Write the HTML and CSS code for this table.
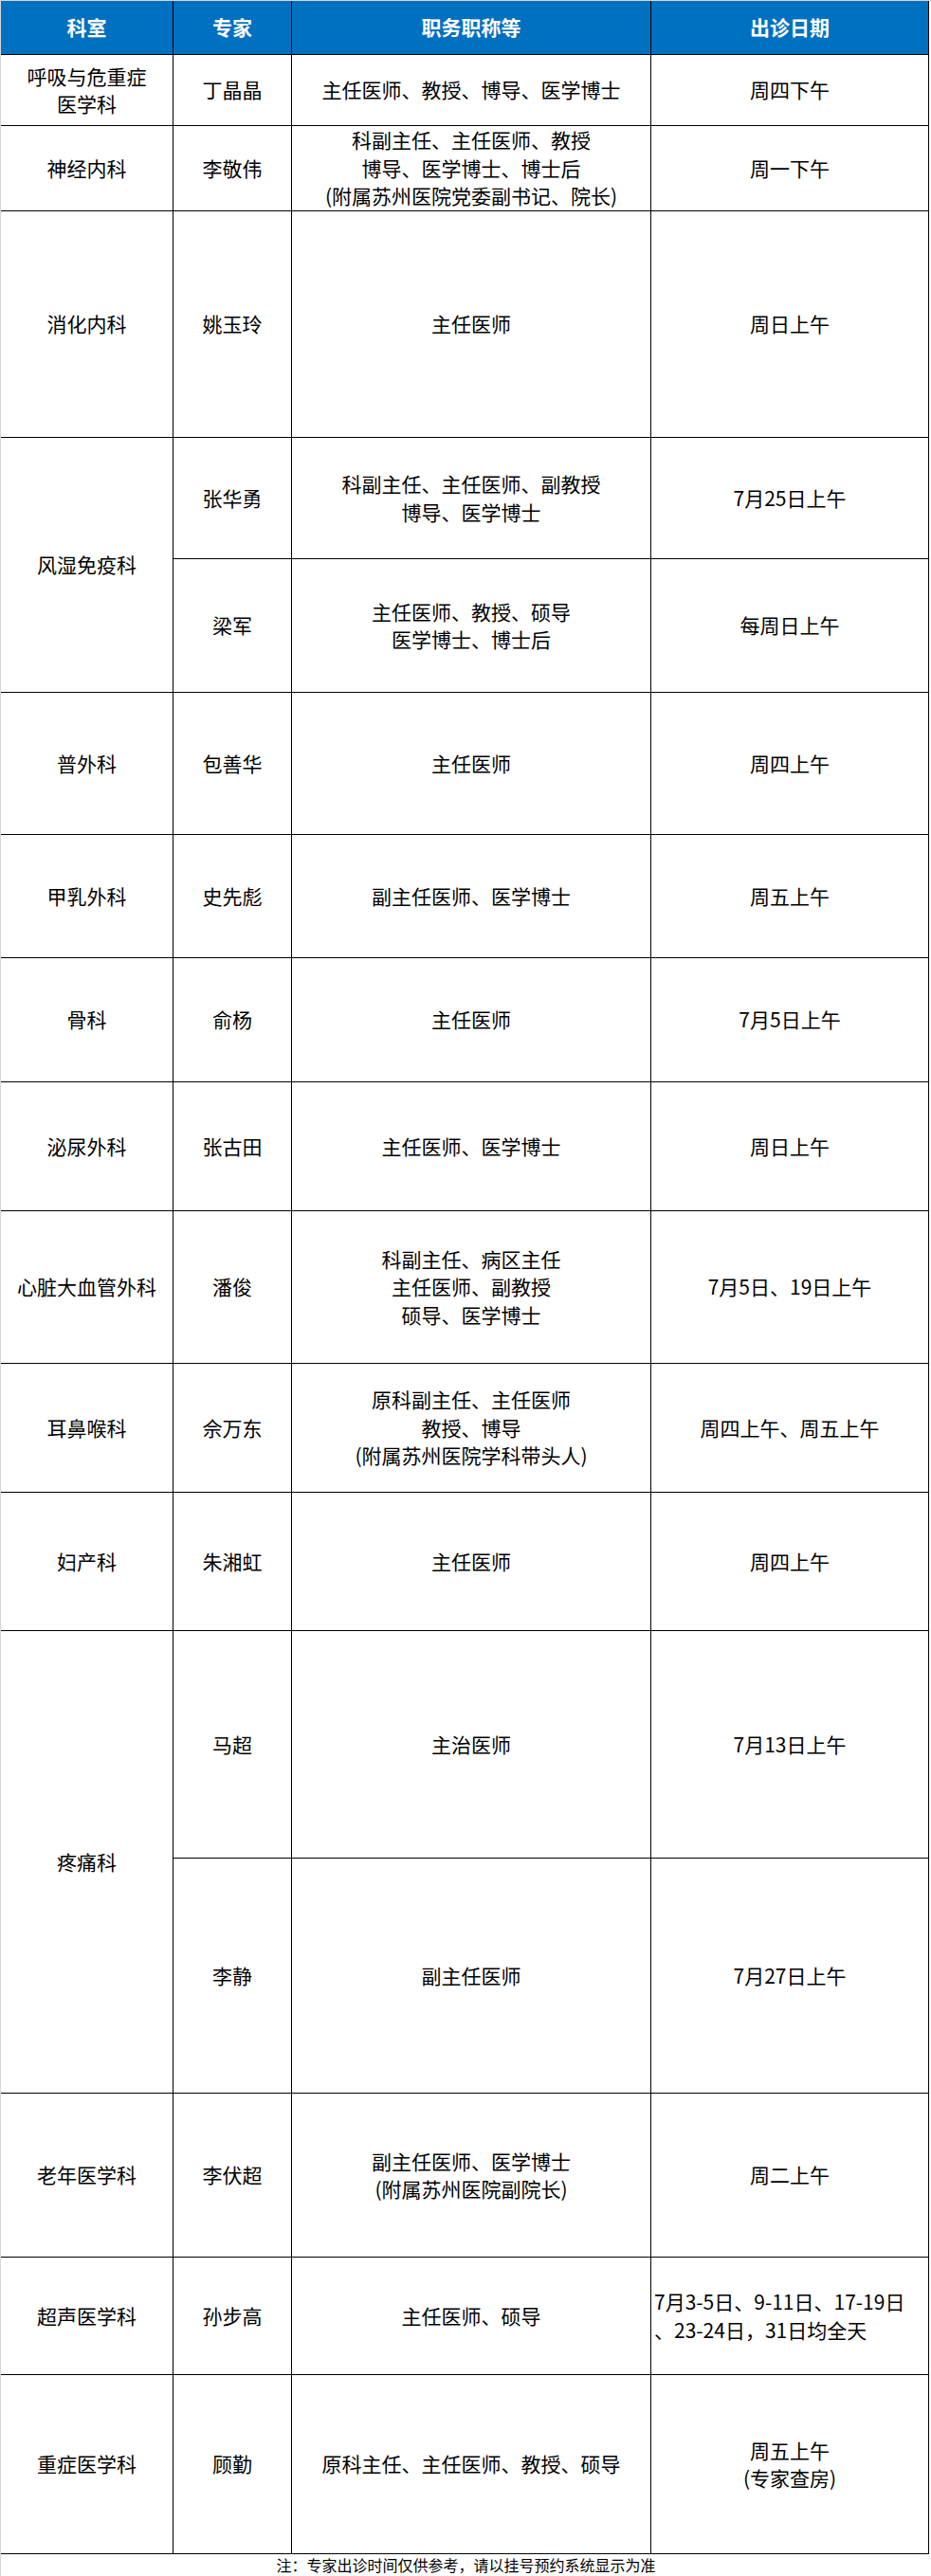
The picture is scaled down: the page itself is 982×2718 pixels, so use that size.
FILE: index.html
```html
<!DOCTYPE html>
<html lang="zh-CN">
<head>
<meta charset="utf-8">
<title>专家出诊表</title>
<link rel="stylesheet" href="styles.css">
</head>
<body>
<div class="sheet">
  <div class="grid">
    <div class="cell head">科室</div>
    <div class="cell head">专家</div>
    <div class="cell head">职务职称等</div>
    <div class="cell head">出诊日期</div>

    <div class="cell"><p>呼吸与危重症<br>医学科</p></div>
    <div class="cell">丁晶晶</div>
    <div class="cell">主任医师、教授、博导、医学博士</div>
    <div class="cell">周四下午</div>

    <div class="cell">神经内科</div>
    <div class="cell">李敬伟</div>
    <div class="cell"><p>科副主任、主任医师、教授<br>博导、医学博士、博士后<br>(附属苏州医院党委副书记、院长)</p></div>
    <div class="cell">周一下午</div>

    <div class="cell">消化内科</div>
    <div class="cell">姚玉玲</div>
    <div class="cell">主任医师</div>
    <div class="cell">周日上午</div>

    <div class="cell span2">风湿免疫科</div>
    <div class="cell">张华勇</div>
    <div class="cell"><p>科副主任、主任医师、副教授<br>博导、医学博士</p></div>
    <div class="cell">7月25日上午</div>
    <div class="cell">梁军</div>
    <div class="cell"><p>主任医师、教授、硕导<br>医学博士、博士后</p></div>
    <div class="cell">每周日上午</div>

    <div class="cell">普外科</div>
    <div class="cell">包善华</div>
    <div class="cell">主任医师</div>
    <div class="cell">周四上午</div>

    <div class="cell">甲乳外科</div>
    <div class="cell">史先彪</div>
    <div class="cell">副主任医师、医学博士</div>
    <div class="cell">周五上午</div>

    <div class="cell">骨科</div>
    <div class="cell">俞杨</div>
    <div class="cell">主任医师</div>
    <div class="cell">7月5日上午</div>

    <div class="cell">泌尿外科</div>
    <div class="cell">张古田</div>
    <div class="cell">主任医师、医学博士</div>
    <div class="cell">周日上午</div>

    <div class="cell">心脏大血管外科</div>
    <div class="cell">潘俊</div>
    <div class="cell"><p>科副主任、病区主任<br>主任医师、副教授<br>硕导、医学博士</p></div>
    <div class="cell">7月5日、19日上午</div>

    <div class="cell">耳鼻喉科</div>
    <div class="cell">佘万东</div>
    <div class="cell"><p>原科副主任、主任医师<br>教授、博导<br>(附属苏州医院学科带头人)</p></div>
    <div class="cell">周四上午、周五上午</div>

    <div class="cell">妇产科</div>
    <div class="cell">朱湘虹</div>
    <div class="cell">主任医师</div>
    <div class="cell">周四上午</div>

    <div class="cell span2">疼痛科</div>
    <div class="cell">马超</div>
    <div class="cell">主治医师</div>
    <div class="cell">7月13日上午</div>
    <div class="cell">李静</div>
    <div class="cell">副主任医师</div>
    <div class="cell">7月27日上午</div>

    <div class="cell">老年医学科</div>
    <div class="cell">李伏超</div>
    <div class="cell"><p>副主任医师、医学博士<br>(附属苏州医院副院长)</p></div>
    <div class="cell">周二上午</div>

    <div class="cell">超声医学科</div>
    <div class="cell">孙步高</div>
    <div class="cell">主任医师、硕导</div>
    <div class="cell left"><p><span class="nowrap">7月3-5日、9-11日、17-19日</span><br>、23-24日，31日均全天</p></div>

    <div class="cell">重症医学科</div>
    <div class="cell">顾勤</div>
    <div class="cell">原科主任、主任医师、教授、硕导</div>
    <div class="cell"><p>周五上午<br>(专家查房)</p></div>
  </div>
  <div class="note">注：专家出诊时间仅供参考，请以挂号预约系统显示为准</div>
</div>
</body>
</html>
```

FILE: styles.css
```css
html, body {
  margin: 0;
  padding: 0;
  background: #ffffff;
}

body {
  font-family: "Noto Sans CJK SC", "Noto Sans", sans-serif;
  color: #000000;
  width: 982px;
  overflow: hidden;
}

.sheet {
  border-top: 1px solid #d6d6d6;
  border-left: 1px solid #d6d6d6;
  width: 981px;
}

.grid {
  display: grid;
  grid-template-columns: 182px 125px 379px 293px;
  grid-template-rows:
    57px 75px 90px 239px 128px 141px 150px 130px 131px 136px
    161px 136px 146px 240px 248px 173px 124px 189px;
}

.cell {
  box-sizing: border-box;
  border-right: 1px solid #000000;
  border-bottom: 1px solid #000000;
  display: flex;
  align-items: center;
  justify-content: center;
  text-align: center;
  font-size: 21px;
  line-height: 29.5px;
  padding: 0 2px;
}

.cell p {
  margin: 0;
}

.head {
  background: #0070c0;
  color: #ffffff;
  font-weight: bold;
}

.span2 {
  grid-row: span 2;
}

.left {
  justify-content: flex-start;
  text-align: left;
  padding-left: 3px;
}

.nowrap {
  white-space: nowrap;
}

.note {
  height: 23px;
  font-size: 16px;
  line-height: 23px;
  text-align: center;
  width: 981px;
  white-space: nowrap;
}
```
